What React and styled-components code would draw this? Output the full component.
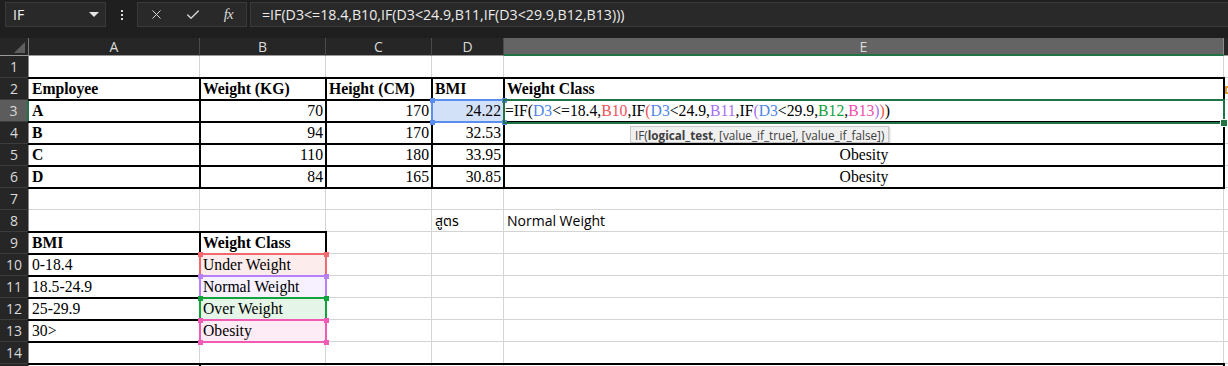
import React from "react";
import styled, { createGlobalStyle, css } from "styled-components";
import { X, Check } from "lucide-react";

const GlobalStyle = createGlobalStyle`
  * { box-sizing: border-box; }
  body { margin: 0; background: #1f1f1f; overflow: hidden; }
`;

const GREEN = "#217346";
const SANS = `"Open Sans", "Noto Sans", "Noto Sans Thai", "DejaVu Sans", sans-serif`;
const SERIF = `"Liberation Serif", "Times New Roman", serif`;

const REF = {
  d3: { line: "#5b8def", fill: "#d3e1f8", text: "#4f86e8" },
  b10: { line: "#f26a6e", fill: "#fdecec", text: "#ef5257" },
  b11: { line: "#b880f7", fill: "#f6f0ff", text: "#a970f2" },
  b12: { line: "#14a23c", fill: "#e5f5e8", text: "#13a03a" },
  b13: { line: "#f15bb5", fill: "#fdebf5", text: "#ef4fac" },
};

const COLS = ["A", "B", "C", "D", "E", "F"];

/* ---------- formula bar ---------- */

const Toolbar = styled.div`
  display: flex;
  align-items: flex-start;
  height: 38px;
  padding: 2px 0 0 5px;
  background: #1f1f1f;
`;

const NameBox = styled.div`
  width: 101px;
  height: 25px;
  display: flex;
  align-items: center;
  justify-content: space-between;
  padding: 0 6px 0 7px;
  background: #292929;
  border: 1px solid #3a3a3a;
  color: #f0f0f0;
  font: 14px ${SANS};
`;

const Caret = styled.span`
  width: 0;
  height: 0;
  border-left: 5px solid transparent;
  border-right: 5px solid transparent;
  border-top: 5px solid #e4e4e4;
`;

const Kebab = styled.div`
  width: 31px;
  height: 25px;
  display: flex;
  flex-direction: column;
  align-items: center;
  justify-content: center;
  gap: 2px;

  span {
    width: 2px;
    height: 2px;
    background: #dcdcdc;
  }
`;

const ButtonGroup = styled.div`
  width: 110px;
  height: 25px;
  display: flex;
  align-items: center;
  padding-left: 1px;
  background: #292929;
  border: 1px solid #3a3a3a;
`;

const ToolButton = styled.div`
  width: 36px;
  height: 23px;
  display: flex;
  align-items: center;
  justify-content: center;
  color: #d8d8d8;
`;

const Fx = styled.span`
  font: italic 15px ${SERIF};
  color: #d8d8d8;
  letter-spacing: -1px;
`;

const FormulaInput = styled.div`
  flex: 1;
  height: 25px;
  margin-left: 3px;
  display: flex;
  align-items: center;
  padding-left: 11px;
  background: #292929;
  border: 1px solid #3a3a3a;
  border-right: 0;
  color: #ececec;
  font: 14.2px ${SANS};
`;

/* ---------- grid ---------- */

const Sheet = styled.div`
  display: grid;
  grid-template-columns: 29px 171px 126px 106px 72px 720px 1fr;
  grid-template-rows: 18px repeat(15, 22px);
  background: #fff;
`;

const Corner = styled.div`
  position: relative;
  background: #262626;
  border-right: 1px solid #7a7a7a;
  border-bottom: 1px solid #9a9a9a;

  &::after {
    content: "";
    position: absolute;
    right: 3px;
    bottom: 2px;
    border-left: 11px solid transparent;
    border-bottom: 11px solid #5e5e5e;
  }
`;

const ColHeader = styled.div`
  display: flex;
  align-items: center;
  justify-content: center;
  background: ${(p) => (p.$active ? "#646464" : "#262626")};
  color: #dadada;
  font: 14px ${SANS};
  border-right: 1px solid ${(p) => (p.$active ? "#8a8a8a" : "#4a4a4a")};
  border-bottom: ${(p) => (p.$active ? `2px solid ${GREEN}` : "1px solid #9a9a9a")};
`;

const RowHeader = styled.div`
  display: flex;
  align-items: center;
  justify-content: center;
  background: ${(p) => (p.$active ? "#5c5c5c" : "#262626")};
  color: #dadada;
  font: 14px ${SANS};
  border-bottom: 1px solid #3c3c3c;
  border-right: ${(p) => (p.$active ? `2px solid ${GREEN}` : "1px solid #8a8a8a")};
`;

const Cell = styled.div`
  position: relative;
  display: flex;
  align-items: flex-end;
  justify-content: ${(p) =>
    p.$align === "right" ? "flex-end" : p.$align === "center" ? "center" : "flex-start"};
  padding: 0 2px 2px ${(p) => (p.$flush ? "1px" : "3px")};
  background: ${(p) => p.$fill || "#fff"};
  border-right: 1px solid #d4d4d4;
  border-bottom: 1px solid #d4d4d4;
  color: #000;
  font-family: ${(p) => (p.$sans ? SANS : SERIF)};
  font-size: ${(p) => (p.$sans ? "14px" : "15.7px")};
  font-weight: ${(p) => (p.$bold ? 700 : 400)};
  line-height: 17px;
  white-space: nowrap;

  ${(p) =>
    p.$edges &&
    css`
      &::after {
        content: "";
        position: absolute;
        top: -1px;
        left: -1px;
        right: -2px;
        bottom: -2px;
        z-index: 1;
        pointer-events: none;
        border-top: ${p.$edges.includes("t") ? "2px solid #000" : "0"};
        border-bottom: ${p.$edges.includes("b") ? "2px solid #000" : "0"};
        border-left: ${p.$edges.includes("l") ? "2px solid #000" : "0"};
        border-right: ${p.$edges.includes("r") ? "2px solid #000" : "0"};
      }
    `}
`;

const SmartTag = styled.span`
  position: absolute;
  left: 1px;
  top: 8px;
  width: 3px;
  height: 8px;
  border-top: 2px solid #e09a2c;
  border-bottom: 2px solid #e09a2c;
  border-left: 2px solid #e09a2c;
`;

const RefBox = styled.div`
  position: absolute;
  top: -1px;
  left: -1px;
  right: -2px;
  bottom: -2px;
  z-index: 2;
  pointer-events: none;
  border: 2px solid ${(p) => p.$c};
`;

const Handle = styled.span`
  position: absolute;
  width: 5px;
  height: 5px;
  background: ${(p) => p.$c};
  ${(p) => (p.$v === "t" ? "top: -3.5px;" : "bottom: -3.5px;")}
  ${(p) => (p.$h === "l" ? "left: -3.5px;" : "right: -3.5px;")}
`;

const ActiveBox = styled.div`
  position: absolute;
  top: -1px;
  left: -1px;
  right: -2px;
  bottom: -3px;
  z-index: 3;
  pointer-events: none;
  border: 2px solid ${GREEN};
`;

const FillHandle = styled.span`
  position: absolute;
  right: -4px;
  bottom: -4px;
  width: 6px;
  height: 6px;
  background: ${GREEN};
  outline: 1px solid #fff;
`;

const Tip = styled.div`
  position: absolute;
  left: 126px;
  top: 26px;
  height: 17px;
  z-index: 5;
  display: flex;
  align-items: center;
  padding: 0 4px;
  background: #f0f0f0;
  border: 1px solid #c8c8c8;
  box-shadow: 1px 1px 2px rgba(0, 0, 0, 0.2);
  color: #3d3d3d;
  font: 11.7px ${SANS};
  white-space: nowrap;

  b {
    font-weight: 700;
  }
`;

const Part = styled.span`
  color: ${(p) => p.$c || "#000"};
`;

/* ---------- data ---------- */

const formula = [
  ["=IF("],
  ["D3", REF.d3.text],
  ["<=18.4,"],
  ["B10", REF.b10.text],
  [",IF"],
  ["(", REF.b10.text],
  ["D3", REF.d3.text],
  ["<24.9,"],
  ["B11", REF.b11.text],
  [",IF"],
  ["(", REF.b11.text],
  ["D3", REF.d3.text],
  ["<29.9,"],
  ["B12", REF.b12.text],
  [","],
  ["B13", REF.b13.text],
  [")", REF.b11.text],
  [")", REF.b10.text],
  [")"],
];

const employees = [
  ["A", 70, 170, "24.22", null],
  ["B", 94, 170, "32.53", null],
  ["C", 110, 180, "33.95", "Obesity"],
  ["D", 84, 165, "30.85", "Obesity"],
];

const classes = [
  ["0-18.4", "Under Weight", "b10"],
  ["18.5-24.9", "Normal Weight", "b11"],
  ["25-29.9", "Over Weight", "b12"],
  ["30>", "Obesity", "b13"],
];

const rows = [
  {},
  {
    A: { v: "Employee", bold: true, edges: "tb" },
    B: { v: "Weight (KG)", bold: true, edges: "tbl" },
    C: { v: "Height (CM)", bold: true, edges: "tbl" },
    D: { v: "BMI", bold: true, edges: "tbl" },
    E: { v: "Weight Class", bold: true, edges: "tblr" },
    F: { tag: true },
  },
  ...employees.map(([name, w, h, bmi, cls], i) => ({
    A: { v: name, bold: true, edges: "tb" },
    B: { v: w, align: "right", edges: "tbl" },
    C: { v: h, align: "right", edges: "tbl" },
    D: { v: bmi, align: "right", edges: "tbl", ref: i === 0 ? "d3" : null },
    E:
      i === 0
        ? { formula: true, edges: "tblr", active: true, tip: true }
        : { v: cls, align: "center", edges: "tblr" },
  })),
  {},
  {
    D: { v: "สูตร", sans: true },
    E: { v: "Normal Weight", sans: true },
  },
  {
    A: { v: "BMI", bold: true, edges: "tb" },
    B: { v: "Weight Class", bold: true, edges: "tblr" },
  },
  ...classes.map(([range, label, ref]) => ({
    A: { v: range, edges: "b" },
    B: { v: label, ref, edges: "lr" },
  })),
  {},
  {
    A: { edges: "t" },
    B: { edges: "tl" },
    C: { edges: "t" },
    D: { edges: "t" },
    E: { edges: "tr" },
  },
];

const corners = [
  ["t", "l"],
  ["t", "r"],
  ["b", "l"],
  ["b", "r"],
];

const SheetCell = ({ data }) => {
  const d = data || {};
  const ref = d.ref ? REF[d.ref] : null;
  return (
    <Cell
      $bold={d.bold}
      $align={d.align}
      $sans={d.sans}
      $edges={d.edges}
      $fill={ref ? ref.fill : null}
      $flush={d.formula}
    >
      {d.formula ? formula.map(([t, c], i) => <Part key={i} $c={c}>{t}</Part>) : d.v}
      {d.tag && <SmartTag />}
      {ref && (
        <RefBox $c={ref.line}>
          {corners.map(([v, h]) => (
            <Handle key={v + h} $v={v} $h={h} $c={ref.line} />
          ))}
        </RefBox>
      )}
      {d.active && (
        <ActiveBox>
          <FillHandle />
        </ActiveBox>
      )}
      {d.tip && (
        <Tip>
          IF(<b>logical_test</b>, [value_if_true], [value_if_false])
        </Tip>
      )}
    </Cell>
  );
};

export default function App() {
  return (
    <>
      <GlobalStyle />
      <Toolbar>
        <NameBox>
          IF
          <Caret />
        </NameBox>
        <Kebab>
          <span />
          <span />
          <span />
        </Kebab>
        <ButtonGroup>
          <ToolButton>
            <X size={15} strokeWidth={1.6} />
          </ToolButton>
          <ToolButton>
            <Check size={16} strokeWidth={2} />
          </ToolButton>
          <ToolButton>
            <Fx>fx</Fx>
          </ToolButton>
        </ButtonGroup>
        <FormulaInput>=IF(D3&lt;=18.4,B10,IF(D3&lt;24.9,B11,IF(D3&lt;29.9,B12,B13)))</FormulaInput>
      </Toolbar>
      <Sheet>
        <Corner />
        {COLS.map((c) => (
          <ColHeader key={c} $active={c === "E"}>
            {c === "F" ? "" : c}
          </ColHeader>
        ))}
        {rows.map((r, i) => (
          <React.Fragment key={i}>
            <RowHeader $active={i === 2}>{i < 14 ? i + 1 : ""}</RowHeader>
            {COLS.map((c) => (
              <SheetCell key={c} data={r[c]} />
            ))}
          </React.Fragment>
        ))}
      </Sheet>
    </>
  );
}
